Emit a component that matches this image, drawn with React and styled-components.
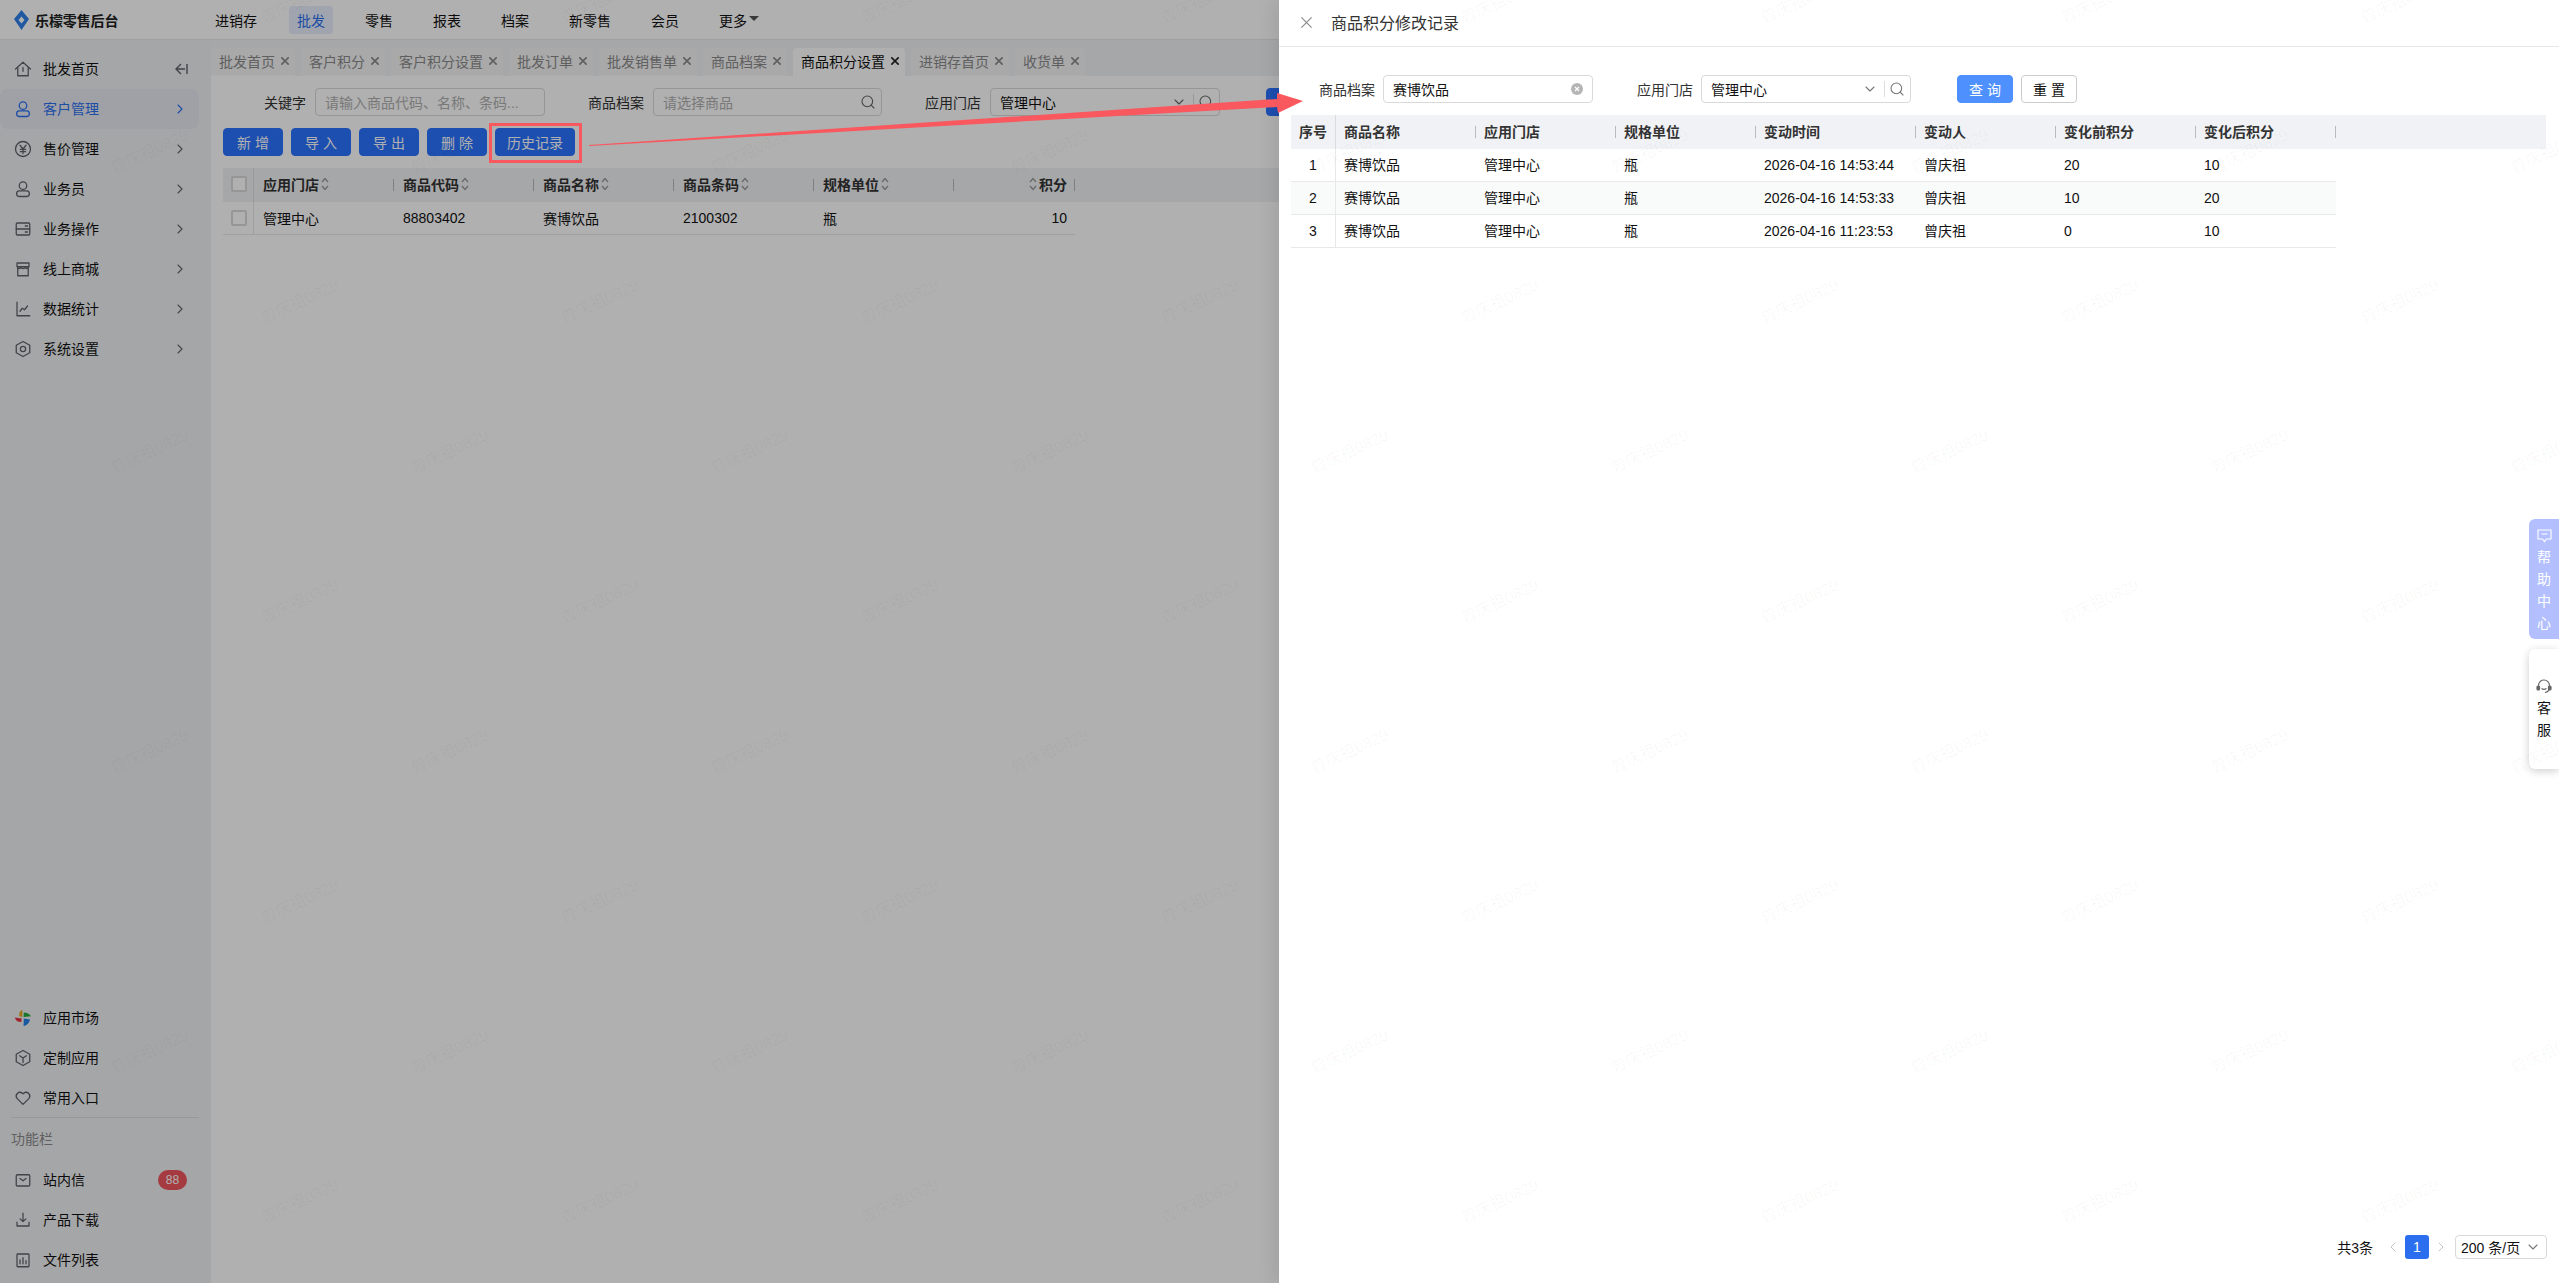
import React from 'react';
import styled, {createGlobalStyle} from 'styled-components';
import {ChevronDown, ChevronLeft, ChevronRight, Search} from 'lucide-react';

const GlobalStyle = createGlobalStyle`
    html, body {
        margin: 0;
        padding: 0;
        background: #fff;
    }
    * {
        box-sizing: border-box;
    }
    body {
        font-family: "Liberation Sans", "Noto Sans CJK SC", sans-serif;
        font-size: 14px;
        color: #111;
    }
`

const Page = styled.div`
    position: relative;
    width: 100vw;
    height: 100vh;
    overflow: hidden;
    display: grid;
    grid-template-rows: 40px 1fr;
`

/* top bar */
const TopBar = styled.header`
    display: flex;
    align-items: center;
    background: #fff;
    border-bottom: 1px solid #e6e6e6;
`

const Brand = styled.div`
    width: 207px;
    padding-left: 14px;
    display: flex;
    align-items: center;
    gap: 6px;
    font-weight: 700;
    color: #222;
    letter-spacing: -0.1px;
`

const Nav = styled.nav`
    display: flex;
    align-items: center;
    gap: 24px;
`

const NavItem = styled.div`
    height: 28px;
    padding: 0 8px;
    border-radius: 4px;
    display: flex;
    align-items: center;
    gap: 2px;
    color: ${p => p.$active ? '#2b6ff0' : '#111'};
    background: ${p => p.$active ? '#e8eefc' : 'transparent'};
`

const Caret = styled.span`
    width: 0;
    height: 0;
    border-left: 5px solid transparent;
    border-right: 5px solid transparent;
    border-top: 5px solid #555;
    margin-top: -3px;
`

/* sidebar */
const Body = styled.div`
    display: grid;
    grid-template-columns: 211px 1fr;
    min-height: 0;
`

const Sidebar = styled.aside`
    background: #f0f1f4;
    padding: 9px 12px 3px 0;
    display: flex;
    flex-direction: column;
    justify-content: space-between;
`

const SideGroup = styled.div`
    display: flex;
    flex-direction: column;
`

const SideItem = styled.div`
    height: 40px;
    padding-left: 14px;
    padding-right: 11px;
    display: flex;
    align-items: center;
    gap: 11px;
    border-radius: 8px;
    color: ${p => p.$active ? '#2b6ff0' : '#111'};
    background: ${p => p.$active ? '#e6e9f2' : 'transparent'};

    svg {
        flex: none;
    }
    span {
        flex: 1;
        margin-bottom: 2px;
    }
`

const SideDivider = styled.div`
    height: 1px;
    margin: -1px 0 0 11px;
    background: #dcdde0;
`

const SideCaption = styled.div`
    height: 42px;
    padding: 13px 0 0 11px;
    color: #8b8b8b;
    line-height: 16px;
`

const Badge = styled.b`
    width: 29px;
    height: 20px;
    margin-right: 1px;
    border-radius: 10px;
    background: #f0565e;
    color: #fff;
    font-weight: 400;
    font-size: 12px;
    display: flex;
    align-items: center;
    justify-content: center;
`

/* main area */
const Main = styled.main`
    min-width: 0;
    background: #fff;
`

const TabStrip = styled.div`
    height: 36px;
    padding-top: 8px;
    display: flex;
    gap: 6px;
    background: #f1f2f5;
`

const Tab = styled.div`
    height: 28px;
    padding: 0 6px 2px 8px;
    display: flex;
    align-items: center;
    gap: 6px;
    border-radius: 4px 4px 0 0;
    background: ${p => p.$active ? '#fff' : '#f5f5f6'};
    border-bottom: 1px solid ${p => p.$active ? '#fff' : '#fbfbfb'};
    color: ${p => p.$active ? '#111' : '#8a8a8a'};
`

const FilterRow = styled.div`
    display: flex;
    align-items: center;
    margin-top: ${p => p.$top || 12}px;
    padding-left: ${p => p.$left || 12}px;
`

const FieldLabel = styled.label`
    width: ${p => p.$width}px;
    margin-right: ${p => p.$gap || 9}px;
    text-align: right;
    color: #333;
    flex: none;
`

const Field = styled.div`
    width: ${p => p.$width}px;
    height: 28px;
    padding: 0 5px 0 9px;
    flex: none;
    display: flex;
    align-items: center;
    border: 1px solid #d9d9d9;
    border-radius: 4px;
    background: #fff;
    color: ${p => p.$placeholder ? '#b0b0b0' : '#111'};

    span {
        flex: 1;
    }
`

const FieldRule = styled.i`
    width: 1px;
    height: 16px;
    margin: 0 4px 0 6px;
    background: #ddd;
`

const ActionRow = styled.div`
    margin: 12px 0 12px 12px;
    display: flex;
    gap: 8px;
`

const Button = styled.button`
    width: ${p => p.$width || 60}px;
    height: 28px;
    margin-left: ${p => p.$left || 0}px;
    padding: 0;
    flex: none;
    font: inherit;
    border-radius: 4px;
    border: 1px solid ${p => p.$plain ? '#ccc' : p.$soft ? '#4d90fe' : '#2b73ff'};
    background: ${p => p.$plain ? '#fff' : p.$soft ? '#4d90fe' : '#2b73ff'};
    color: ${p => p.$plain ? '#111' : '#fff'};
`

/* tables */
const HeadRow = styled.div`
    height: 34px;
    display: flex;
    align-items: center;
    background: #f1f2f5;
    margin: ${p => p.$top || 0}px ${p => p.$right || 0}px 0 12px;
`

const HeadCell = styled.div`
    position: relative;
    width: ${p => p.$w}px;
    height: 100%;
    padding: 0 8px 2px ${p => p.$pad || 8}px;
    flex: none;
    display: flex;
    align-items: center;
    justify-content: ${p => p.$align || 'flex-start'};
    gap: 2px;
    font-weight: 700;
    color: #333;
    border-right: ${p => p.$ruled ? '1px solid #dcdcdc' : 'none'};

    ${p => !p.$ruled && `
        &::after {
            content: "";
            position: absolute;
            right: 0;
            top: 11px;
            height: 12px;
            width: 1px;
            background: #bbb;
        }
    `}
`

const DataRow = styled.div`
    width: ${p => p.$width}px;
    height: 33px;
    margin-left: 12px;
    display: flex;
    align-items: center;
    border-bottom: 1px solid #e8e8e8;
    background: ${p => p.$striped ? '#f9fafa' : 'transparent'};
`

const DataCell = styled.div`
    width: ${p => p.$w}px;
    height: 100%;
    padding: 0 8px ${p => p.$lift ? 2 : 0}px ${p => p.$pad || 8}px;
    flex: none;
    display: flex;
    align-items: center;
    justify-content: ${p => p.$align || 'flex-start'};
    border-right: ${p => p.$ruled ? '1px solid #e8e8e8' : 'none'};
`

const CheckBox = styled.i`
    width: 16px;
    height: 16px;
    flex: none;
    border: 2px solid #d9d9d9;
    border-radius: 2px;
    background: #fff;
`

/* drawer */
const Dim = styled.div`
    position: absolute;
    inset: 0;
    background: rgba(0, 0, 0, 0.31);
`

const Drawer = styled.section`
    position: absolute;
    top: 0;
    right: 0;
    bottom: 0;
    width: 1280px;
    background: #fff;
    box-shadow: -6px 0 16px rgba(0, 0, 0, 0.08);
    display: flex;
    flex-direction: column;
`

const DrawerHead = styled.div`
    height: 47px;
    padding: 0 0 2px 22px;
    flex: none;
    display: flex;
    align-items: center;
    gap: 19px;
    border-bottom: 1px solid #e8e8e8;
    font-size: 16px;
    color: #333;
`

const Pager = styled.div`
    margin-top: auto;
    padding: 0 12px 24px 0;
    display: flex;
    align-items: center;
    justify-content: flex-end;
    gap: 4px;
`

const PagerTotal = styled.span`
    margin-right: 8px;
`

const PagerCurrent = styled.div`
    width: 24px;
    height: 24px;
    border-radius: 3px;
    background: #2b6ff0;
    color: #fff;
    display: flex;
    align-items: center;
    justify-content: center;
`

const PageSize = styled.div`
    width: 92px;
    height: 24px;
    margin-left: 2px;
    padding: 0 5px;
    border: 1px solid #d9d9d9;
    border-radius: 4px;
    display: flex;
    align-items: center;
    justify-content: space-between;
`

/* overlays */
const Dock = styled.div`
    position: absolute;
    top: 519px;
    right: 0;
    width: 30px;
    display: flex;
    flex-direction: column;
    gap: 10px;
`

const DockCard = styled.div`
    height: 120px;
    padding-top: ${p => p.$pad}px;
    border-radius: 6px 0 0 6px;
    display: flex;
    flex-direction: column;
    align-items: center;
    line-height: 22px;
    background: ${p => p.$help ? '#b3bfff' : '#fff'};
    color: ${p => p.$help ? '#fff' : '#111'};
    box-shadow: ${p => p.$help ? 'none' : '0 2px 8px rgba(0, 0, 0, 0.2)'};
`

const DockIcon = styled.svg`
    flex: none;
    margin-bottom: 3px;
`

const Watermarks = styled.div`
    position: absolute;
    top: -75px;
    left: 0;
    right: 0;
    bottom: 0;
    overflow: hidden;
    pointer-events: none;
`

const MarkRow = styled.div`
    height: 150px;
    margin-left: ${p => p.$shift}px;
    display: flex;
`

const Mark = styled.div`
    width: 300px;
    flex: none;
    display: flex;
    align-items: center;
    justify-content: center;
    font-size: 16px;
    color: rgba(0, 0, 0, 0.035);
    transform: rotate(-25deg);
`

const Annotation = styled.svg`
    position: absolute;
    inset: 0;
    width: 100%;
    height: 100%;
    pointer-events: none;
`

const SmallIcon = styled.svg`
    flex: none;
    margin-right: ${p => p.$right || 0}px;
`

/* icons */
const Glyph = ({d, size = 18, color = '#5f6168', width = 1.7, children}) => (
    <svg width={size} height={size} viewBox="0 0 24 24" fill="none" stroke={color} strokeWidth={width} strokeLinecap="round" strokeLinejoin="round">
        {d && <path d={d}/>}
        {children}
    </svg>
)

const paths = {
    home: 'M2 12 12 3l10 9M5 10v11h14V10M12 10v5',
    yen: 'M8 7l4 5 4-5M12 12v6M8.5 12.5h7M8.5 15.5h7',
    ops: 'M3 12h18M15 8h3M15 16h3',
    store: 'M4 9h16M4 9V4h16v5M5 9v12h14V9M4 9c2 3 4 3 5 1 1 2 5 2 6 0 1 2 3 2 5-1',
    chart: 'M4 3v18h17M8 15l3-4 3 2 4-5',
    heart: 'M12 20.5 4 12.5a5 5 0 0 1 7-7l1 1 1-1a5 5 0 0 1 7 7z',
    box: 'M12 2l9 5v10l-9 5-9-5V7zM12 12v6M12 12 7.5 9M12 12l4.5-3',
    mail: 'M8 10l4 3 4-3',
    download: 'M12 3v11M8 10.5l4 3.5 4-3.5M4 15v5h16v-5',
    files: 'M8 12v5M12 9v8M16 13v4',
    hex: 'M12 2l9 5v10l-9 5-9-5V7z',
}

const HomeIcon = () => <Glyph d={paths.home}/>

const UserIcon = ({color}) => (
    <Glyph color={color}>
        <circle cx="12" cy="7.5" r="5"/>
        <rect x="3.5" y="14.5" width="17" height="7.5" rx="3.75"/>
    </Glyph>
)

const YenIcon = () => <Glyph d={paths.yen}><circle cx="12" cy="12" r="10"/></Glyph>
const OpsIcon = () => <Glyph d={paths.ops}><rect x="3" y="4" width="18" height="16" rx="1.5"/></Glyph>
const StoreIcon = () => <Glyph d={paths.store}/>
const ChartIcon = () => <Glyph d={paths.chart}/>
const HexIcon = () => <Glyph d={paths.hex}><circle cx="12" cy="12" r="3.5"/></Glyph>
const BoxIcon = () => <Glyph d={paths.box}/>
const HeartIcon = () => <Glyph d={paths.heart}/>
const MailIcon = () => <Glyph d={paths.mail}><rect x="3" y="5" width="18" height="15" rx="1.5"/></Glyph>
const DownloadIcon = () => <Glyph d={paths.download}/>
const FilesIcon = () => <Glyph d={paths.files}><rect x="4" y="4" width="16" height="17" rx="1"/></Glyph>

const MarketIcon = () => (
    <svg width="18" height="18" viewBox="0 0 18 18">
        <path d="M8.3 1C6 1.6 5 3.6 5.3 7.3l3 .7z" fill="#e8a91a"/>
        <path d="M9.7 3.4c3 .1 6 1.3 7.3 3.9l-7.3.8z" fill="#22ab3c"/>
        <path d="M1 8.4 7.8 9.6 7.2 13C4 13 1.4 11.4 1 8.4z" fill="#e5333d"/>
        <path d="M9.8 9.6 16 10.6c-.5 3.2-3.1 6-6.4 6.4z" fill="#2585e8"/>
    </svg>
)

const LogoIcon = () => (
    <svg width="15" height="20" viewBox="0 0 15 20">
        <path fillRule="evenodd" d="M7.5 0 15 9l-7.5 11L0 9zM7.5 6.5 4.5 10l3 3.5 3-3.5z" fill="#2f80ea"/>
    </svg>
)

const CollapseIcon = () => (
    <svg width="13" height="12" viewBox="0 0 13 12" fill="none" stroke="#5f6168" strokeWidth="1.4">
        <path d="M6 1 1 6l5 5M1 6h9M12 1v10"/>
    </svg>
)

const Cross = ({size = 8, color = '#8a8a8a', width = 1.6}) => (
    <SmallIcon width={size} height={size} viewBox="0 0 8 8" fill="none" stroke={color} strokeWidth={width}>
        <path d="M0.3 0.3 7.7 7.7M7.7 0.3 0.3 7.7"/>
    </SmallIcon>
)

const SortIcon = () => (
    <SmallIcon width="8" height="14" viewBox="0 0 8 14" fill="none" stroke="#999" strokeWidth="1.3">
        <path d="M1 5 4 1.5 7 5M1 9l3 3.5L7 9"/>
    </SmallIcon>
)

const ClearIcon = () => (
    <SmallIcon $right={4} width="12" height="12" viewBox="0 0 12 12">
        <circle cx="6" cy="6" r="6" fill="#b5b5b5"/>
        <path d="M4 4l4 4M8 4l-4 4" stroke="#fff" strokeWidth="1.2"/>
    </SmallIcon>
)

const HelpIcon = () => (
    <DockIcon width="15" height="14" viewBox="0 0 15 14" fill="none" stroke="#fff" strokeWidth="1.1">
        <path d="M1 1h13v9H9.5l-2 2.5-2-2.5H1zM4.5 5h6"/>
    </DockIcon>
)

const HeadsetIcon = () => (
    <DockIcon width="16" height="15" viewBox="0 0 16 15" fill="none" stroke="#666" strokeWidth="1.2">
        <path d="M2.5 8V6.5a5.5 5.5 0 0 1 11 0V9c0 2.5-2 4-4.5 4.5"/>
        <rect x="1" y="7" width="2.5" height="4" rx="1" fill="#666"/>
        <rect x="12.5" y="7" width="2.5" height="4" rx="1" fill="#666"/>
        <path d="M5.5 9.5c1.5 1 3.5 1 5 0"/>
    </DockIcon>
)

/* data */
const navItems = ['进销存', '批发', '零售', '报表', '档案', '新零售', '会员']

const menuTop = [
    {label: '批发首页', Icon: HomeIcon, collapse: true},
    {label: '客户管理', Icon: UserIcon, active: true},
    {label: '售价管理', Icon: YenIcon},
    {label: '业务员', Icon: UserIcon},
    {label: '业务操作', Icon: OpsIcon},
    {label: '线上商城', Icon: StoreIcon},
    {label: '数据统计', Icon: ChartIcon},
    {label: '系统设置', Icon: HexIcon},
]

const tabs = ['批发首页', '客户积分', '客户积分设置', '批发订单', '批发销售单', '商品档案', '商品积分设置', '进销存首页', '收货单']

const settingColumns = ['应用门店', '商品代码', '商品名称', '商品条码', '规格单位']

const settingRow = ['管理中心', '88803402', '赛博饮品', '2100302', '瓶']

const logColumns = [
    {title: '商品名称', w: 140, cjk: true},
    {title: '应用门店', w: 140, cjk: true},
    {title: '规格单位', w: 140, cjk: true},
    {title: '变动时间', w: 160},
    {title: '变动人', w: 140, cjk: true},
    {title: '变化前积分', w: 140},
    {title: '变化后积分', w: 140},
]

const logRows = [
    ['1', '赛博饮品', '管理中心', '瓶', '2026-04-16 14:53:44', '曾庆祖', '20', '10'],
    ['2', '赛博饮品', '管理中心', '瓶', '2026-04-16 14:53:33', '曾庆祖', '10', '20'],
    ['3', '赛博饮品', '管理中心', '瓶', '2026-04-16 11:23:53', '曾庆祖', '0', '10'],
]

const markRows = [149, -1, 149, -1, 149, -1, 149, -1, 149, -1]
const markCols = [0, 1, 2, 3, 4, 5, 6, 7, 8]

const App = () => (
    <>
        <GlobalStyle/>
        <Page>
            <TopBar>
                <Brand><LogoIcon/>乐檬零售后台</Brand>
                <Nav>
                    {navItems.map(item => <NavItem key={item} $active={item === '批发'}>{item}</NavItem>)}
                    <NavItem>更多<Caret/></NavItem>
                </Nav>
            </TopBar>
            <Body>
                <Sidebar>
                    <SideGroup>
                        {menuTop.map(({label, Icon, active, collapse}) => (
                            <SideItem key={label} $active={active}>
                                <Icon color={active ? '#2b6ff0' : undefined}/>
                                <span>{label}</span>
                                {collapse
                                    ? <CollapseIcon/>
                                    : <ChevronRight size={16} strokeWidth={1.6} color={active ? '#2b6ff0' : '#666'}/>}
                            </SideItem>
                        ))}
                    </SideGroup>
                    <SideGroup>
                        <SideItem><MarketIcon/><span>应用市场</span></SideItem>
                        <SideItem><BoxIcon/><span>定制应用</span></SideItem>
                        <SideItem><HeartIcon/><span>常用入口</span></SideItem>
                        <SideDivider/>
                        <SideCaption>功能栏</SideCaption>
                        <SideItem><MailIcon/><span>站内信</span><Badge>88</Badge></SideItem>
                        <SideItem><DownloadIcon/><span>产品下载</span></SideItem>
                        <SideItem><FilesIcon/><span>文件列表</span></SideItem>
                    </SideGroup>
                </Sidebar>
                <Main>
                    <TabStrip>
                        {tabs.map(tab => (
                            <Tab key={tab} $active={tab === '商品积分设置'}>
                                {tab}
                                <Cross color={tab === '商品积分设置' ? '#222' : '#8a8a8a'}/>
                            </Tab>
                        ))}
                    </TabStrip>
                    <FilterRow>
                        <FieldLabel $width={83}>关键字</FieldLabel>
                        <Field $width={230} $placeholder><span>请输入商品代码、名称、条码...</span></Field>
                        <FieldLabel $width={99}>商品档案</FieldLabel>
                        <Field $width={229} $placeholder>
                            <span>请选择商品</span>
                            <Search size={16} strokeWidth={1.6} color="#666"/>
                        </Field>
                        <FieldLabel $width={99}>应用门店</FieldLabel>
                        <Field $width={230}>
                            <span>管理中心</span>
                            <ChevronDown size={16} strokeWidth={1.6} color="#666"/>
                            <FieldRule/>
                            <Search size={16} strokeWidth={1.6} color="#666"/>
                        </Field>
                        <Button $left={46}>查 询</Button>
                    </FilterRow>
                    <ActionRow>
                        <Button>新 增</Button>
                        <Button>导 入</Button>
                        <Button>导 出</Button>
                        <Button>删 除</Button>
                        <Button $width={80}>历史记录</Button>
                    </ActionRow>
                    <HeadRow>
                        <HeadCell $w={31} $ruled><CheckBox/></HeadCell>
                        {settingColumns.map(title => (
                            <HeadCell key={title} $w={140} $pad={9}>{title}<SortIcon/></HeadCell>
                        ))}
                        <HeadCell $w={121} $align="flex-end"><SortIcon/>积分</HeadCell>
                    </HeadRow>
                    <DataRow $width={852}>
                        <DataCell $w={31} $ruled><CheckBox/></DataCell>
                        {settingRow.map((value, i) => <DataCell key={i} $w={140} $pad={9}>{value}</DataCell>)}
                        <DataCell $w={121} $align="flex-end">10</DataCell>
                    </DataRow>
                </Main>
            </Body>
            <Dim/>
            <Drawer>
                <DrawerHead>
                    <Cross size={11} color="#888" width={0.8}/>
                    商品积分修改记录
                </DrawerHead>
                <FilterRow $top={28}>
                    <FieldLabel $width={84} $gap={8}>商品档案</FieldLabel>
                    <Field $width={210}>
                        <span>赛博饮品</span>
                        <ClearIcon/>
                    </Field>
                    <FieldLabel $width={100} $gap={8}>应用门店</FieldLabel>
                    <Field $width={210}>
                        <span>管理中心</span>
                        <ChevronDown size={16} strokeWidth={1.6} color="#777"/>
                        <FieldRule/>
                        <Search size={16} strokeWidth={1.6} color="#777"/>
                    </Field>
                    <Button $width={56} $left={46} $soft>查 询</Button>
                    <Button $width={56} $left={8} $plain>重 置</Button>
                </FilterRow>
                <HeadRow $top={12} $right={13}>
                    <HeadCell $w={45} $ruled $pad={8}>序号</HeadCell>
                    {logColumns.map(col => <HeadCell key={col.title} $w={col.w}>{col.title}</HeadCell>)}
                </HeadRow>
                {logRows.map((row, r) => (
                    <DataRow key={row[0]} $width={1045} $striped={r === 1}>
                        <DataCell $w={45} $ruled $align="center">{row[0]}</DataCell>
                        {logColumns.map((col, i) => <DataCell key={col.title} $w={col.w} $lift={col.cjk}>{row[i + 1]}</DataCell>)}
                    </DataRow>
                ))}
                <Pager>
                    <PagerTotal>共3条</PagerTotal>
                    <ChevronLeft size={16} strokeWidth={1.5} color="#c4c4c4"/>
                    <PagerCurrent>1</PagerCurrent>
                    <ChevronRight size={16} strokeWidth={1.5} color="#c4c4c4"/>
                    <PageSize>
                        200 条/页
                        <ChevronDown size={16} strokeWidth={1.6} color="#777"/>
                    </PageSize>
                </Pager>
            </Drawer>
            <Annotation viewBox="0 0 2559 1283">
                <rect x="490.5" y="124.5" width="90" height="37" fill="none" stroke="#f9585e" strokeWidth="3"/>
                <polygon points="589,145 1277,99 1277,93 1303,101 1278,113 1277,107 589,146" fill="#f9585e"/>
            </Annotation>
            <Dock>
                <DockCard $help $pad={10}>
                    <HelpIcon/>
                    <span>帮</span><span>助</span><span>中</span><span>心</span>
                </DockCard>
                <DockCard $pad={30}>
                    <HeadsetIcon/>
                    <span>客</span><span>服</span>
                </DockCard>
            </Dock>
            <Watermarks>
                {markRows.map((shift, r) => (
                    <MarkRow key={r} $shift={shift}>
                        {markCols.map(c => <Mark key={c}>曾庆祖0829</Mark>)}
                    </MarkRow>
                ))}
            </Watermarks>
        </Page>
    </>
)

export default App
